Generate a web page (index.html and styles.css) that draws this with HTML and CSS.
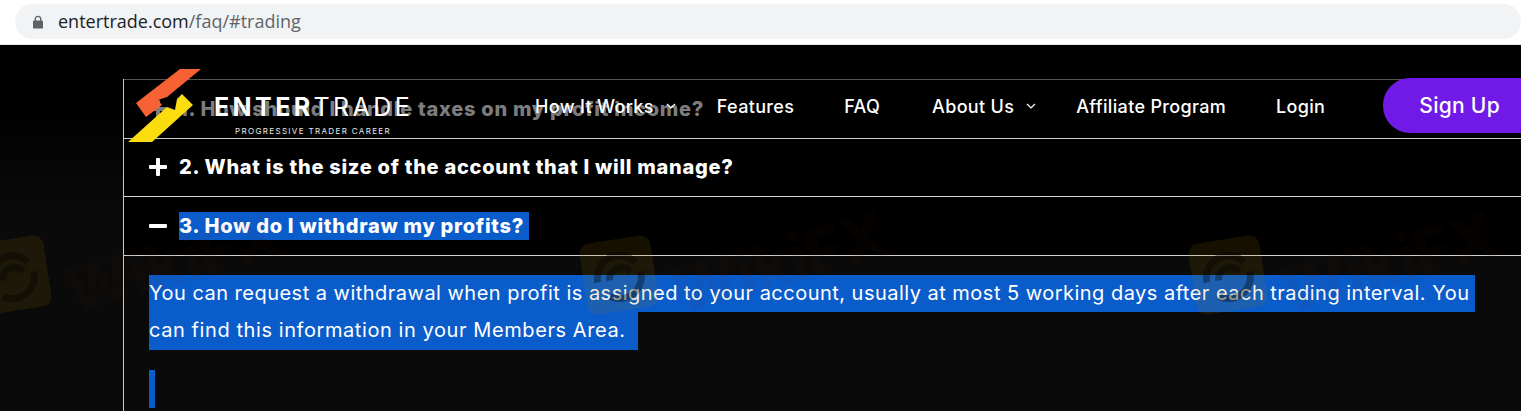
FILE: index.html
```html
<!DOCTYPE html>
<html lang="en">
<head>
<meta charset="utf-8">
<title>Entertrade FAQ</title>
<link rel="stylesheet" href="styles.css">
</head>
<body>
<div class="browser-bar">
  <div class="address">
    <svg class="lock" viewBox="0 0 12 14" width="12" height="14"><path d="M3.2 6V4.2a2.8 2.8 0 0 1 5.6 0V6" fill="none" stroke="#5f6368" stroke-width="1.4"/><rect x="1" y="5.6" width="10" height="8" rx="1.2" fill="#5f6368"/></svg>
    <span class="url"><span class="host">entertrade.com</span>/faq/#trading</span>
  </div>
</div>
<main class="page">
  <div class="accordion">
    <div class="row row-first"><span class="icon-plus icon-faded"></span><span class="q q-faded">1. How should I handle taxes on my profit income?</span></div>
    <div class="row"><span class="icon-plus"></span><span class="q">2. What is the size of the account that I will manage?</span></div>
    <div class="row"><span class="icon-minus"></span><span class="q q-selected">3. How do I withdraw my profits?&nbsp;</span></div>
    <div class="panel">
      <span class="line line-one">You can request a withdrawal when profit is assigned to your account, usually at most 5 working days after each trading interval. You</span>
      <span class="line line-two">can find this information in your Members Area.&nbsp;</span>
      <span class="caret"></span>
    </div>
  </div>

  <div class="watermark wm-a">
    <svg class="wm-logo" viewBox="0 0 72 72" width="72" height="72"><rect width="72" height="72" rx="11" fill="#a07800" fill-opacity=".13"/><path d="M14 40a22 22 0 0 1 40-14M58 36a22 22 0 0 1-34 20M26 40c0-10 14-16 22-6" fill="none" stroke="#000" stroke-opacity=".35" stroke-width="7"/></svg>
    <span class="wm-text">WikiFX</span>
  </div>
  <div class="watermark wm-b">
    <svg class="wm-logo" viewBox="0 0 72 72" width="72" height="72"><rect width="72" height="72" rx="11" fill="#a07800" fill-opacity=".13"/><path d="M14 40a22 22 0 0 1 40-14M58 36a22 22 0 0 1-34 20M26 40c0-10 14-16 22-6" fill="none" stroke="#000" stroke-opacity=".35" stroke-width="7"/></svg>
    <span class="wm-text">WikiFX</span>
  </div>
  <div class="watermark wm-c">
    <svg class="wm-logo" viewBox="0 0 72 72" width="72" height="72"><rect width="72" height="72" rx="11" fill="#a07800" fill-opacity=".13"/><path d="M14 40a22 22 0 0 1 40-14M58 36a22 22 0 0 1-34 20M26 40c0-10 14-16 22-6" fill="none" stroke="#000" stroke-opacity=".35" stroke-width="7"/></svg>
    <span class="wm-text">WikiFX</span>
  </div>

  <header class="site-header">
    <div class="logo">
      <svg class="logo-mark" viewBox="0 0 76 76" width="76" height="76">
        <polygon points="74,0 53,0 9,34 19,48 35,36 31,31 40,28" fill="#f76234"/>
        <polygon points="55,25 66,36 25,73 1,73 40,38 48,41 50,30" fill="#fbdc0e"/>
      </svg>
      <div class="logo-text">
        <div class="logo-name"><b>ENTER</b>TRADE</div>
        <div class="logo-tag">PROGRESSIVE TRADER CAREER</div>
      </div>
    </div>
    <nav class="nav">
      <a class="nav-item has-caret">How It Works<svg class="chev" viewBox="0 0 10 6" width="10" height="6"><path d="M1 1l4 4 4-4" fill="none" stroke="#fff" stroke-width="1.2"/></svg></a>
      <a class="nav-item">Features</a>
      <a class="nav-item">FAQ</a>
      <a class="nav-item has-caret nav-about">About Us<svg class="chev" viewBox="0 0 10 6" width="10" height="6"><path d="M1 1l4 4 4-4" fill="none" stroke="#fff" stroke-width="1.2"/></svg></a>
      <a class="nav-item">Affiliate Program</a>
      <a class="nav-item">Login</a>
      <a class="signup">Sign Up</a>
    </nav>
  </header>
</main>
</body>
</html>
```
FILE: styles.css
```css
* { box-sizing: border-box; }
html, body { margin: 0; height: 411px; overflow: hidden; background: #000; }
body { font-family: "Inter", "Liberation Sans", sans-serif; color: #fff; }

.browser-bar { height: 45px; background: #fff; padding: 4px 0 5px 15px; border-bottom: 1px solid #e8e8e8; }
.address { height: 35px; background: #f1f3f4; border-radius: 18px; display: flex; align-items: center; padding-left: 17px; gap: 14px; }
.lock { display: block; }
.url { font: 18px "Open Sans", sans-serif; color: #5f6368; line-height: 35px; }
.host { color: #202124; }

.page { position: relative; height: 366px; padding-top: 34px; overflow: hidden;
  background: linear-gradient(#000 60px, #0a0a0a 170px); }

.accordion { position: relative; z-index: 1; margin-left: 123px; border-left: 1px solid #c9c9c9; }
.row { height: 58.5px; background: #000; border-top: 1px solid #cfcfcf; display: flex; align-items: center; padding-left: 25px; gap: 12px; }
.row-first { border-top-color: #555; }
.q { font-size: 20px; font-weight: 800; line-height: 28px; letter-spacing: .73px; white-space: nowrap; }
.q-faded { color: #7d7d7d; }
.q-selected { background: #0a5ccb; }
.icon-plus, .icon-minus { position: relative; width: 18px; height: 18px; flex: none; color: #fff; }
.icon-faded { color: #7d7d7d; }
.icon-plus::before, .icon-minus::before { content: ""; position: absolute; left: 0; right: 0; top: 7px; height: 4px; background: currentColor; border-radius: 1px; }
.icon-plus::after { content: ""; position: absolute; top: 0; bottom: 0; left: 7px; width: 4px; background: currentColor; border-radius: 1px; }

.panel { border-top: 1px solid #cfcfcf; padding: 19px 0 20px 25px; background: #0a0a0a; }
.line { display: block; width: fit-content; height: 37.5px; line-height: 37px; font-size: 20px; letter-spacing: .48px; background: #0a5ccb; white-space: nowrap; }
.line-one { padding-right: 6px; }
.line-two { padding-right: 6px; letter-spacing: .58px; }
.caret { display: block; width: 6px; height: 38px; margin-top: 20px; background: #0a5ccb; }

.watermark { position: absolute; top: 194px; z-index: 2; display: flex; align-items: flex-start; gap: 18px; pointer-events: none; }
.wm-a { left: -24px; }
.wm-b { left: 583px; }
.wm-c { left: 1192px; }
.wm-logo { display: block; flex: none; transform: rotate(-9deg); }
.wm-text { font-size: 62px; line-height: 70px; font-weight: 800; color: rgba(110, 35, 0, .06); transform: rotate(-16deg) translateY(-12px); }

.site-header { position: absolute; z-index: 3; left: 127px; right: 0; top: 23px; height: 76px; display: flex; align-items: center; }
.logo { display: flex; width: 383px; flex: none; height: 76px; }
.logo-mark { display: block; flex: none; margin-top: 1px; }
.logo-text { margin-left: 11px; padding-top: 24px; }
.logo-name { font-size: 25px; line-height: 30px; letter-spacing: 3.4px; font-weight: 400; white-space: nowrap; }
.logo-name b { font-weight: 700; }
.logo-tag { font-size: 8px; line-height: 10px; letter-spacing: 1.35px; margin: 4px 0 0 21px; white-space: nowrap; color: #e8e8e8; }

.nav { display: flex; align-items: center; font-size: 18px; font-weight: 500; letter-spacing: .33px; flex: 1; min-width: 0; }
.nav-item { padding: 0 25px; display: flex; align-items: center; white-space: nowrap; }
.nav-item.has-caret { padding-right: 16px; }
.nav-item.nav-about { padding-left: 27px; padding-right: 15px; }
.chev { margin-left: 12px; }
.signup { margin: -2px 0 0 33px; width: 180px; height: 55px; flex: none; background: #7119e6; border-radius: 27px; display: flex; align-items: center; padding-left: 36px; font-size: 21px; letter-spacing: .3px; }
```
